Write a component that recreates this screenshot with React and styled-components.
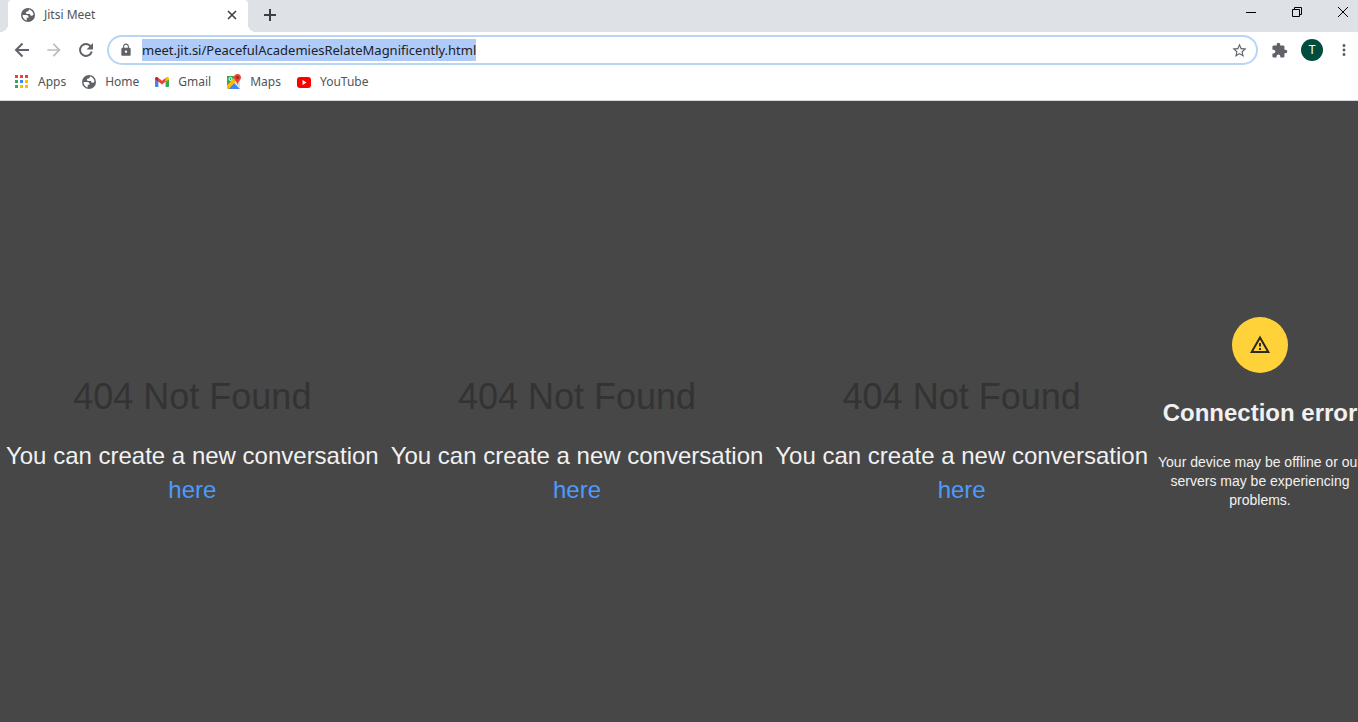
import React from "react";
import styled, { createGlobalStyle } from "styled-components";
import { MdArrowForward, MdLock, MdStarBorder, MdExtension, MdMoreVert } from "react-icons/md";

const Global = createGlobalStyle`
  * { box-sizing: border-box; }
  body { margin: 0; background: #474747; font-family: "Liberation Sans", Arial, sans-serif; overflow-x: hidden; }
  button { border: 0; padding: 0; background: none; font: inherit; color: inherit; }
  h1, h2, p { margin: 0; font-weight: 400; }
`;

const Page = styled.div`
  display: flex;
  flex-direction: column;
  min-height: 100vh;
`;

const Chrome = styled.header`
  font-family: "Noto Sans", "Segoe UI", sans-serif;
  background: #fff;
  border-bottom: 1px solid #d6d8db;
`;

const TabStrip = styled.div`
  display: flex;
  height: 32px;
  padding-left: 8px;
  background: #dee1e6;
`;

const Tab = styled.div`
  position: relative;
  display: flex;
  align-items: center;
  gap: 8px;
  width: 240px;
  height: 32px;
  padding: 0 8px 2px 12px;
  background: #fff;
  border-radius: 4px 4px 0 0;
  color: #505458;

  &::before, &::after {
    content: "";
    position: absolute;
    bottom: 0;
    width: 8px;
    height: 8px;
  }
  &::before {
    left: -8px;
    background: radial-gradient(circle at 0 0, #dee1e6 8px, #fff 8px);
  }
  &::after {
    right: -8px;
    background: radial-gradient(circle at 100% 0, #dee1e6 8px, #fff 8px);
  }
`;

const TabTitle = styled.span`
  flex: 1;
  padding-bottom: 1px;
  font-size: 12px;
  line-height: 16px;
`;

const IconButton = styled.button`
  display: flex;
  align-items: center;
  justify-content: center;
  width: ${(p) => p.$w || 32}px;
  height: ${(p) => p.$h || 28}px;
  color: ${(p) => p.$color || "#5f6368"};
`;

const WindowControls = styled.div`
  display: flex;
  margin: 0 -8px 0 auto;
`;

const Toolbar = styled.div`
  display: flex;
  align-items: center;
  height: 36px;
  padding: 0 5px 0 6px;
`;

const AddressBar = styled.div`
  flex: 1;
  display: flex;
  align-items: center;
  height: 30px;
  margin: 0 5px;
  padding: 0 8px 0 10px;
  border: 2px solid #b8d5f8;
  border-radius: 15px;
  color: #5f6368;
`;

const Url = styled.input`
  field-sizing: content;
  height: 22px;
  margin: 0 auto 0 9px;
  padding: 0;
  border: 0;
  outline: 0;
  background: #aecbfa;
  color: #202124;
  font-family: inherit;
  font-size: 13px;
`;

const Avatar = styled.button`
  width: 22px;
  height: 22px;
  margin: 0 12px 0 6px;
  border-radius: 50%;
  background: #004d40;
  color: #fff;
  font-family: Roboto, sans-serif;
  font-size: 12px;
  line-height: 22px;
`;

const Bookmarks = styled.nav`
  display: flex;
  align-items: center;
  gap: 15px;
  height: 32px;
  padding: 0 14px 4px;
`;

const Bookmark = styled.a`
  display: flex;
  align-items: center;
  gap: 8px;
  color: #505458;
  font-size: 12px;
  line-height: 16px;
  text-decoration: none;
`;

const Content = styled.main`
  flex: 1;
  display: grid;
  grid-template-columns: repeat(3, 1fr) 204px;
  align-items: start;
  overflow: hidden;
  padding-top: 216px;
  background: #474747;
  color: #f1f1f1;
  text-align: center;
`;

const NotFound = styled.section`
  padding-top: 60px;
`;

const NotFoundTitle = styled.h1`
  color: #333;
  font-size: 36px;
  line-height: 40px;
`;

const NotFoundText = styled.p`
  margin-top: 22px;
  padding: 0 4px;
  font-size: 24px;
  line-height: 34px;
`;

const HereLink = styled.a`
  display: block;
  color: #4c9aff;
  text-decoration: none;
`;

const ErrorPanel = styled.section`
  display: flex;
  flex-direction: column;
  align-items: center;
  width: 212px;
`;

const WarningBadge = styled.div`
  display: flex;
  align-items: center;
  justify-content: center;
  width: 56px;
  height: 56px;
  border-radius: 50%;
  background: #ffd23a;
`;

const ErrorTitle = styled.h2`
  margin-top: 24px;
  font-size: 24px;
  font-weight: 700;
  line-height: 32px;
  white-space: nowrap;
`;

const ErrorText = styled.p`
  margin-top: 24px;
  font-size: 14px;
  line-height: 19px;
`;

const BackIcon = () => (
  <svg width="16" height="16" viewBox="0 0 16 16" fill="none" stroke="currentColor" strokeWidth="2" aria-hidden="true">
    <path d="M15 8H2.500M8.500 1.500L2 8l6.500 6.500" />
  </svg>
);

const ReloadIcon = () => (
  <svg width="16" height="16" viewBox="0 0 16 16" aria-hidden="true">
    <path d="M13 4.600A6 6 0 1 0 13.800 9.500" fill="none" stroke="currentColor" strokeWidth="2" />
    <path d="M15 1v6.500H8.500z" fill="currentColor" />
  </svg>
);

const Globe = () => (
  <svg width="16" height="16" viewBox="0 0 16 16" aria-hidden="true">
    <circle cx="8" cy="8" r="7" fill="#5f6368" />
    <path d="M2.500 8.100h3.700c1.500 0 2.300.7 2.300 1.900v.7H6.700v2.800C4.200 12.900 2.500 10.700 2.500 8.100z" fill="#fff" />
    <path d="M9.300 2.600c2.400.6 4.100 2.700 4.200 5.200-.8.900-1.700 1.200-2.500.9-.7-.3-.9-.9-.9-1.700H7.200c-.9 0-1.400-.6-1.300-1.400.1-.9.800-1.200 1.700-1.200h.8c.1-.9.200-1.400.9-1.800z" fill="#fff" />
  </svg>
);

const APP_COLORS = ["#ea4335", "#ea4335", "#ea4335", "#34a853", "#4285f4", "#fbbc04", "#34a853", "#fbbc04", "#fbbc04"];

const AppsIcon = () => (
  <svg width="16" height="16" viewBox="0 0 16 16" aria-hidden="true">
    {APP_COLORS.map((c, i) => (
      <rect key={i} x={1 + (i % 3) * 5} y={1 + Math.floor(i / 3) * 5} width="3" height="3" fill={c} />
    ))}
  </svg>
);

const GmailIcon = () => (
  <svg width="16" height="16" viewBox="0 0 16 16" aria-hidden="true">
    <path d="M1 5v7.200c0 .5.400.8.900.8H4.400V7.200z" fill="#4285f4" />
    <path d="M15 5v7.200c0 .5-.4.8-.9.8h-2.500V7.200z" fill="#34a853" />
    <path d="M4.200 3.800L8 6.700l3.800-2.900v3.800L8 10.500 4.200 7.600z" fill="#ea4335" />
    <path d="M1 4.500C1 3 2.600 2.500 3.600 3.300l.8.600v3.900L1 5.200z" fill="#c5221f" />
    <path d="M15 4.500c0-1.500-1.600-2-2.600-1.200l-.8.600v3.900L15 5.200z" fill="#fbbc04" />
  </svg>
);

const MapsIcon = () => (
  <svg width="16" height="16" viewBox="0 0 16 16" aria-hidden="true">
    <path d="M1 2h9.500L1 12z" fill="#34a853" />
    <path d="M1 11.500l8-8.500 2.500 3L2.500 15H1z" fill="#fbbc04" />
    <path d="M8.500 8.500L14 3v11z" fill="#dadce0" />
    <path d="M2.500 15L8.300 9l5.700 6z" fill="#4285f4" />
    <circle cx="4.500" cy="5" r="1.500" fill="none" stroke="#fff" />
    <path d="M11.500 0C9.300 0 8 1.700 8 3.500c0 2.500 2.900 3.500 3.500 7.500.6-4 3.500-5 3.500-7.500C15 1.700 13.700 0 11.500 0z" fill="#ea4335" />
    <circle cx="11.500" cy="3.500" r="1.300" fill="#8c1d18" />
  </svg>
);

const YouTubeIcon = () => (
  <svg width="16" height="16" viewBox="0 0 16 16" aria-hidden="true">
    <rect x="1" y="3" width="14" height="11" rx="3" fill="#f00" />
    <path d="M6.500 6v5l4-2.500z" fill="#fff" />
  </svg>
);

const WarningIcon = () => (
  <svg width="24" height="24" viewBox="0 0 24 24" aria-hidden="true">
    <path d="M12 4.500L20.300 19H3.700z" fill="none" stroke="#2b2a20" strokeWidth="2" />
    <path d="M11 10h2v3.500h-2zM11 15h2v2h-2z" fill="#2b2a20" />
  </svg>
);

const BOOKMARKS = [
  { label: "Apps", Icon: AppsIcon },
  { label: "Home", Icon: Globe },
  { label: "Gmail", Icon: GmailIcon },
  { label: "Maps", Icon: MapsIcon },
  { label: "YouTube", Icon: YouTubeIcon },
];

export default function App() {
  return (
    <Page>
      <Global />
      <Chrome>
        <TabStrip>
          <Tab>
            <Globe />
            <TabTitle>Jitsi Meet</TabTitle>
            <IconButton $w={16} $h={16} $color="#3c4043" aria-label="Close tab">
              <svg width="10" height="10" viewBox="0 0 10 10"><path d="M1 1l8 8M9 1L1 9" stroke="currentColor" strokeWidth="1.600" /></svg>
            </IconButton>
          </Tab>
          <IconButton $w={44} $h={30} $color="#3c4043" aria-label="New tab">
            <svg width="12" height="12" viewBox="0 0 12 12"><path d="M6 0v12M0 6h12" stroke="currentColor" strokeWidth="2" /></svg>
          </IconButton>
          <WindowControls>
            <IconButton $w={46} $h={24} $color="#000" aria-label="Minimize">
              <svg width="10" height="10" viewBox="0 0 10 10"><path d="M0 5.500h10" stroke="currentColor" /></svg>
            </IconButton>
            <IconButton $w={46} $h={24} $color="#000" aria-label="Restore">
              <svg width="10" height="10" viewBox="0 0 10 10" fill="none" stroke="currentColor"><path d="M.5 2.500h7v7h-7zM2.500 2.500v-2h7v7h-2" /></svg>
            </IconButton>
            <IconButton $w={46} $h={24} $color="#000" aria-label="Close">
              <svg width="10" height="10" viewBox="0 0 10 10"><path d="M0 0l10 10M10 0L0 10" stroke="currentColor" /></svg>
            </IconButton>
          </WindowControls>
        </TabStrip>
        <Toolbar>
          <IconButton aria-label="Back"><BackIcon /></IconButton>
          <IconButton $color="#babcbe" aria-label="Forward"><MdArrowForward size={20} /></IconButton>
          <IconButton aria-label="Reload"><ReloadIcon /></IconButton>
          <AddressBar>
            <MdLock size={14} />
            <Url aria-label="Address" defaultValue="meet.jit.si/PeacefulAcademiesRelateMagnificently.html" />
            <IconButton $w={18} $h={18} aria-label="Bookmark this page"><MdStarBorder size={17} /></IconButton>
          </AddressBar>
          <IconButton aria-label="Extensions"><MdExtension size={17} /></IconButton>
          <Avatar aria-label="Profile">T</Avatar>
          <IconButton $w={18} aria-label="Menu"><MdMoreVert size={20} /></IconButton>
        </Toolbar>
        <Bookmarks>
          {BOOKMARKS.map(({ label, Icon }) => (
            <Bookmark href="#" key={label}><Icon />{label}</Bookmark>
          ))}
        </Bookmarks>
      </Chrome>
      <Content>
        {[0, 1, 2].map((i) => (
          <NotFound key={i}>
            <NotFoundTitle>404 Not Found</NotFoundTitle>
            <NotFoundText>
              You can create a new conversation <HereLink href="#">here</HereLink>
            </NotFoundText>
          </NotFound>
        ))}
        <ErrorPanel>
          <WarningBadge><WarningIcon /></WarningBadge>
          <ErrorTitle>Connection error</ErrorTitle>
          <ErrorText>Your device may be offline or our servers may be experiencing problems.</ErrorText>
        </ErrorPanel>
      </Content>
    </Page>
  );
}
